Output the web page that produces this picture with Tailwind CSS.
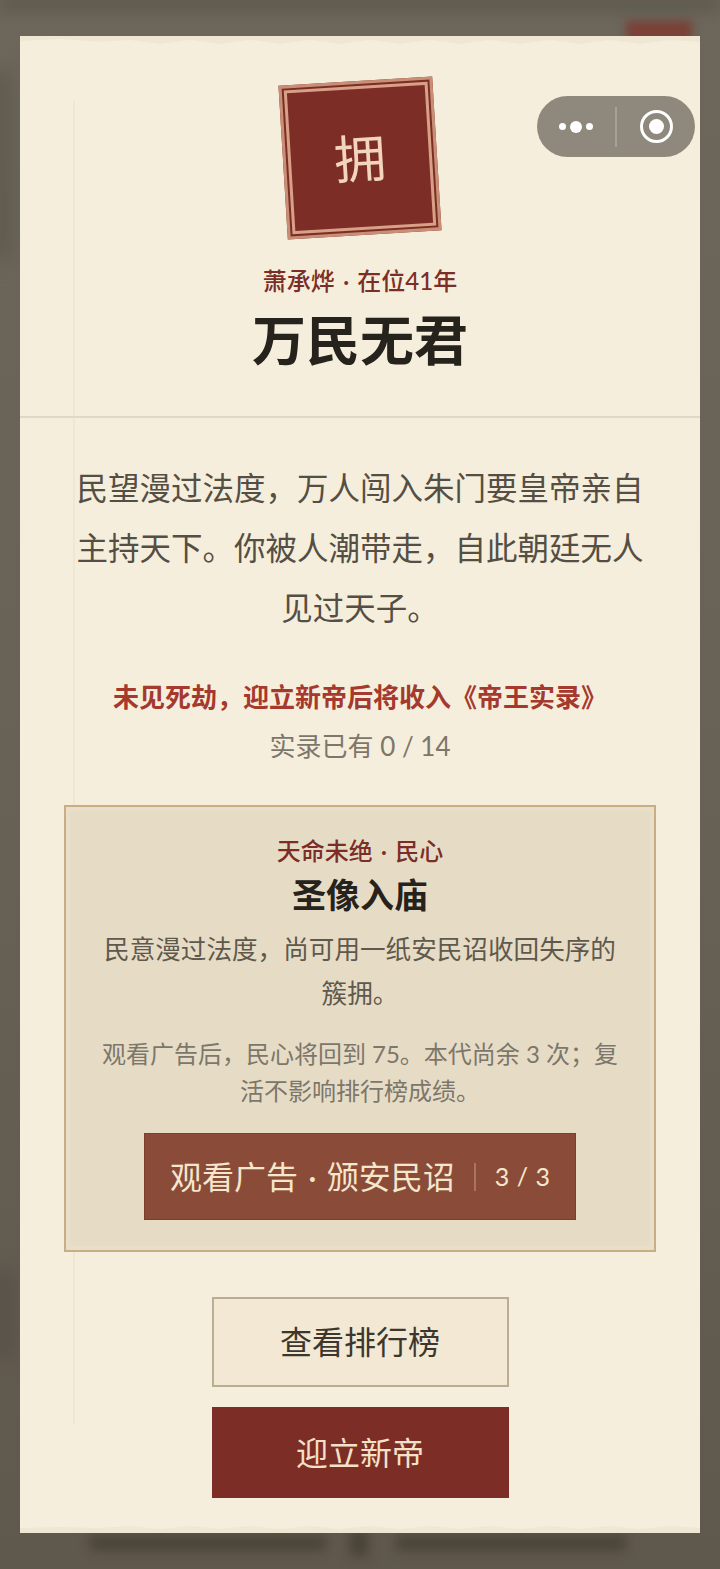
<!DOCTYPE html>
<html lang="zh-CN">
  <head>
    <meta charset="UTF-8" />
    <meta name="viewport" content="width=device-width, initial-scale=1.0" />
    <title>万民无君</title>
    <script src="https://cdn.jsdelivr.net/npm/@tailwindcss/browser@4"></script>
  </head>
  <body class="bg-[#6a6458] font-['Lato','Noto_Sans_CJK_SC',sans-serif] overflow-hidden">
    <div class="relative w-[720px] h-[1569px] overflow-hidden bg-gradient-to-b from-[#6d675b] via-[#686256] to-[#5f584c]">
      <!-- blurred page behind the dialog -->
      <div class="absolute left-[626px] top-[20px] w-[66px] h-[30px] bg-[#7a4238] blur-[4px]"></div>
      <div class="absolute left-[0px] top-[-6px] w-[720px] h-[18px] bg-[#5f594e] blur-[8px]"></div>
      <div class="absolute left-[-8px] top-[70px] w-[20px] h-[190px] bg-[#5f594d] blur-[10px]"></div>
      <div class="absolute left-[-8px] top-[1270px] w-[22px] h-[90px] bg-[#57514a] blur-[10px]"></div>
      <div class="absolute left-[90px] top-[1536px] w-[236px] h-[14px] bg-[#484236] blur-[6px]"></div>
      <div class="absolute left-[350px] top-[1530px] w-[18px] h-[26px] bg-[#484236] blur-[6px]"></div>
      <div class="absolute left-[396px] top-[1536px] w-[230px] h-[14px] bg-[#484236] blur-[6px]"></div>

      <div class="absolute left-[20px] top-[36px] w-[680px] h-[1497px] bg-[#f6eedc] overflow-hidden">
        <!-- paper margin line and worn edges -->
        <div class="absolute left-[53px] top-[65px] w-[2px] h-[1324px] bg-[#efe6d3]"></div>
        <svg class="absolute left-0 top-0" width="680" height="10" viewBox="0 0 680 10">
          <path d="M0 0H680V6L650 4 620 8 590 4 560 8 530 4 500 8 470 4 440 8 410 4 380 8 350 4 320 8 290 4 260 8 230 4 200 8 170 4 140 8 110 4 80 6 40 3 0 5Z" fill="#efe7d4" />
        </svg>
        <svg class="absolute left-0 bottom-0" width="680" height="10" viewBox="0 0 680 10">
          <path d="M0 10H680V5L650 3 620 6 590 3 560 6 530 3 500 6 470 3 440 6 410 3 380 6 350 3 320 6 290 3 260 6 230 3 200 6 170 3 140 6 110 3 80 5 40 4 0 5Z" fill="#efe7d4" />
        </svg>

        <div class="relative flex flex-col items-center">
          <div class="mt-[45px] w-[154px] h-[154px] -rotate-[3.5deg] border-[3px] border-[#c98f76] p-[2px] bg-[#7c2e26]">
            <div class="w-full h-full border-[3px] border-[#d9a088] flex items-center justify-center">
              <span class="text-[52px] leading-none text-[#f3d5bd]">拥</span>
            </div>
          </div>
          <p class="mt-[28px] text-[24px] leading-[36px] font-medium text-[#7c2e26] [word-spacing:2px]">萧承烨 · 在位41年</p>
          <h1 class="mt-[7px] text-[54px] leading-[70px] font-bold text-[#26221c]">万民无君</h1>
          <div class="mt-[40px] w-full h-[2px] bg-[#e0d8c5]"></div>

          <p class="mt-[40px] w-[576px] text-center text-[31.5px] leading-[60px] text-[#544e44]">民望漫过法度，万人闯入朱门要皇帝亲自主持天下。你被人潮带走，自此朝廷无人见过天子。</p>
          <p class="mt-[39px] text-[26px] leading-[40px] font-semibold text-[#a5392d]">未见死劫，迎立新帝后将收入《帝王实录》</p>
          <p class="mt-[9px] text-[26px] leading-[40px] text-[#7d766a]">实录已有 0 / 14</p>

          <section class="mt-[39px] w-[592px] h-[447px] border-2 border-[#c9ae84] bg-[#e8dfca] p-[4px]">
            <div class="h-full bg-[#e6dcc6] flex flex-col items-center pt-[22px]">
              <p class="text-[24px] leading-[36px] font-medium text-[#7c2e26] [word-spacing:2px]">天命未绝 · 民心</p>
              <h2 class="mt-[2px] text-[34px] leading-[48px] font-bold text-[#26221c]">圣像入庙</h2>
              <p class="mt-[8px] w-[520px] text-center text-[25.6px] leading-[44px] text-[#5f594d]">民意漫过法度，尚可用一纸安民诏收回失序的簇拥。</p>
              <p class="mt-[20px] w-[530px] text-center text-[24px] leading-[37px] text-[#7d766a]">观看广告后，民心将回到 75。本代尚余 3 次；复活不影响排行榜成绩。</p>
              <button class="mt-[24px] w-[432px] h-[87px] bg-[#8a4b38] border border-[#7c3f2e] text-[#f5e6cc] flex items-center justify-center">
                <span class="text-[32px] [word-spacing:2px]">观看广告 · 颁安民诏</span>
                <span class="mx-[19px] w-[2px] h-[28px] bg-[#a87560]"></span>
                <span class="text-[25px] [word-spacing:1px]">3 / 3</span>
              </button>
            </div>
          </section>

          <button class="mt-[45px] w-[297px] h-[90px] bg-[#f2e8d3] border-2 border-[#b9ad93] text-[32px] text-[#3c372e]">查看排行榜</button>
          <button class="mt-[20px] w-[297px] h-[91px] bg-[#7c2e26] text-[32px] text-[#f5e0c8]">迎立新帝</button>
        </div>
      </div>

      <!-- mini program capsule -->
      <div class="absolute left-[537px] top-[96px] w-[158px] h-[61px] rounded-full bg-[#8e897c] flex items-center">
        <div class="w-[78px] flex items-center justify-center gap-[4px]">
          <span class="w-[7px] h-[7px] rounded-full bg-white"></span>
          <span class="w-[12px] h-[12px] rounded-full bg-white"></span>
          <span class="w-[7px] h-[7px] rounded-full bg-white"></span>
        </div>
        <div class="w-[2px] h-[40px] bg-[#a5a195]"></div>
        <div class="flex-1 flex items-center justify-center">
          <div class="w-[33px] h-[33px] rounded-full border-[3px] border-white flex items-center justify-center">
            <span class="w-[15px] h-[15px] rounded-full bg-white"></span>
          </div>
        </div>
      </div>
    </div>
  </body>
</html>
